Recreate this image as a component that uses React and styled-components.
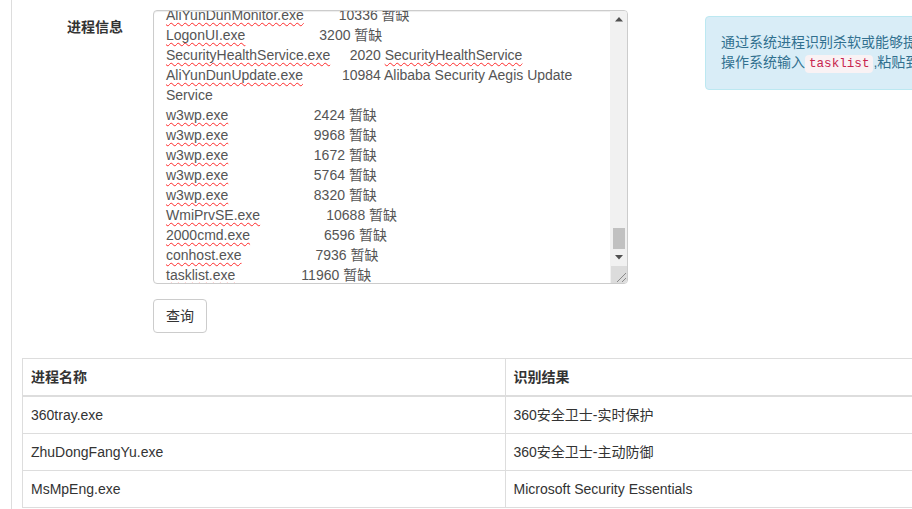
import React from 'react';
import styled, { createGlobalStyle } from 'styled-components';

const GlobalStyle = createGlobalStyle`
  html, body {
    margin: 0;
    padding: 0;
    overflow: hidden;
    background: #fff;
  }
  body {
    font-family: "Liberation Sans", Arial, "Noto Sans CJK SC", sans-serif;
    font-size: 14px;
    line-height: 20px;
    color: #333;
  }
  * { box-sizing: border-box; }
`;

const Page = styled.div`
  margin-left: 11px;
  border-left: 1px solid #dddddd;
  width: 1300px;
  min-height: 509px;
  padding: 10px 0 0 10px;
`;

const FormRow = styled.div`
  display: flex;
  align-items: flex-start;
`;

const Label = styled.div`
  width: 101px;
  padding-top: 7px;
  text-align: right;
  font-weight: bold;
  color: #333;
`;

const FieldCol = styled.div`
  margin-left: 30px;
  width: 475px;
  display: flex;
  flex-direction: column;
  align-items: flex-start;
`;

const TextBox = styled.div`
  width: 475px;
  height: 274px;
  border: 1px solid #ccc;
  border-radius: 4px;
  box-shadow: inset 0 1px 1px rgba(0, 0, 0, 0.075);
  display: flex;
  overflow: hidden;
  background: #fff;
`;

const TextViewport = styled.div`
  flex: 1;
  overflow: hidden;
  padding: 0 4px 0 12px;
`;

const TextContent = styled.div`
  margin-top: -6px;
  color: #555;
  white-space: pre-wrap;
  line-height: 20px;
`;

const Line = styled.div`
  min-height: 20px;
`;

const Misspelled = styled.span`
  text-decoration: underline wavy #ff2a2a;
  text-decoration-thickness: 1px;
  text-underline-offset: 2px;
  text-decoration-skip-ink: none;
`;

const ScrollBar = styled.div`
  width: 17px;
  background: #f1f1f1;
  display: flex;
  flex-direction: column;
  border-left: 1px solid #f1f1f1;
`;

const ScrollButton = styled.div`
  height: 17px;
  display: flex;
  align-items: center;
  justify-content: center;
`;

const ScrollTrack = styled.div`
  flex: 1;
  display: flex;
  flex-direction: column;
  justify-content: flex-end;
  padding: 0 2px;
`;

const ScrollThumb = styled.div`
  height: 21px;
  background: #c1c1c1;
`;

const Resizer = styled.div`
  height: 17px;
  background: #dcdcdc;
  display: flex;
  align-items: flex-end;
  justify-content: flex-end;
`;

const Button = styled.button`
  margin-top: 15px;
  height: 34px;
  padding: 6px 12px;
  font-family: "Liberation Sans", Arial, "Noto Sans CJK SC", sans-serif;
  font-size: 14px;
  line-height: 20px;
  color: #333;
  background: #fff;
  border: 1px solid #ccc;
  border-radius: 4px;
`;

const Alert = styled.div`
  margin-left: 77px;
  margin-top: 6px;
  width: 520px;
  padding: 15px;
  background: #d9edf7;
  border: 1px solid #bce8f1;
  border-radius: 4px;
  color: #31708f;
  white-space: nowrap;
`;

const Code = styled.code`
  font-family: "Liberation Mono", "DejaVu Sans Mono", monospace;
  font-size: 12.6px;
  padding: 2px 4px;
  color: #c7254e;
  background: #f9f2f4;
  border-radius: 4px;
`;

const Table = styled.table`
  margin-top: 25px;
  width: 966px;
  border-collapse: collapse;
  table-layout: fixed;
  border: 1px solid #ddd;
`;

const Th = styled.th`
  text-align: left;
  padding: 8px;
  line-height: 20px;
  border: 1px solid #ddd;
  border-bottom: 2px solid #ddd;
  font-weight: bold;
  color: #333;
`;

const Td = styled.td`
  padding: 8px;
  line-height: 20px;
  border: 1px solid #ddd;
  color: #333;
`;

const processes = [
  { name: 'AliYunDunMonitor.exe', pid: '10336', desc: '暂缺' },
  { name: 'LogonUI.exe', pid: '3200', desc: '暂缺' },
  { name: 'SecurityHealthService.exe', pid: '2020', desc: 'SecurityHealthService', descErr: true },
  { name: 'AliYunDunUpdate.exe', pid: '10984', desc: 'Alibaba Security Aegis Update Service' },
  { name: 'w3wp.exe', pid: '2424', desc: '暂缺' },
  { name: 'w3wp.exe', pid: '9968', desc: '暂缺' },
  { name: 'w3wp.exe', pid: '1672', desc: '暂缺' },
  { name: 'w3wp.exe', pid: '5764', desc: '暂缺' },
  { name: 'w3wp.exe', pid: '8320', desc: '暂缺' },
  { name: 'WmiPrvSE.exe', pid: '10688', desc: '暂缺' },
  { name: '2000cmd.exe', pid: '6596', desc: '暂缺' },
  { name: 'conhost.exe', pid: '7936', desc: '暂缺' },
  { name: 'tasklist.exe', pid: '11960', desc: '暂缺' },
];

const results = [
  ['360tray.exe', '360安全卫士-实时保护'],
  ['ZhuDongFangYu.exe', '360安全卫士-主动防御'],
  ['MsMpEng.exe', 'Microsoft Security Essentials'],
];

const pad = (p) =>
  ' '.repeat(Math.max(1, 26 - p.name.length)) + p.pid.padStart(8) + ' ';

const Arrow = ({ down }) => (
  <svg width="8" height="5" viewBox="0 0 8 5">
    <path d={down ? 'M0 0 H8 L4 4.5 Z' : 'M0 4.5 H8 L4 0 Z'} fill="#505050" />
  </svg>
);

export default function App() {
  return (
    <>
      <GlobalStyle />
      <Page>
        <FormRow>
          <Label>进程信息</Label>
          <FieldCol>
            <TextBox>
              <TextViewport>
                <TextContent>
                  {processes.map((p, i) => (
                    <Line key={i}>
                      <Misspelled>{p.name}</Misspelled>
                      {pad(p)}
                      {p.descErr ? <Misspelled>{p.desc}</Misspelled> : p.desc}
                    </Line>
                  ))}
                </TextContent>
              </TextViewport>
              <ScrollBar>
                <ScrollButton>
                  <Arrow />
                </ScrollButton>
                <ScrollTrack>
                  <ScrollThumb />
                </ScrollTrack>
                <ScrollButton>
                  <Arrow down />
                </ScrollButton>
                <Resizer>
                  <svg width="13" height="13" viewBox="0 0 13 13">
                    <path d="M12 3 L3 12 M12 8 L8 12" stroke="#8a8a8a" strokeWidth="1" />
                  </svg>
                </Resizer>
              </ScrollBar>
            </TextBox>
            <Button>查询</Button>
          </FieldCol>
          <Alert>
            通过系统进程识别杀软或能够提权的第三方软件，在目标
            <br />
            操作系统输入<Code>tasklist</Code>,粘贴到左侧文本框中查询。
          </Alert>
        </FormRow>
        <Table>
          <thead>
            <tr>
              <Th>进程名称</Th>
              <Th>识别结果</Th>
            </tr>
          </thead>
          <tbody>
            {results.map(([n, r]) => (
              <tr key={n}>
                <Td>{n}</Td>
                <Td>{r}</Td>
              </tr>
            ))}
          </tbody>
        </Table>
      </Page>
    </>
  );
}
